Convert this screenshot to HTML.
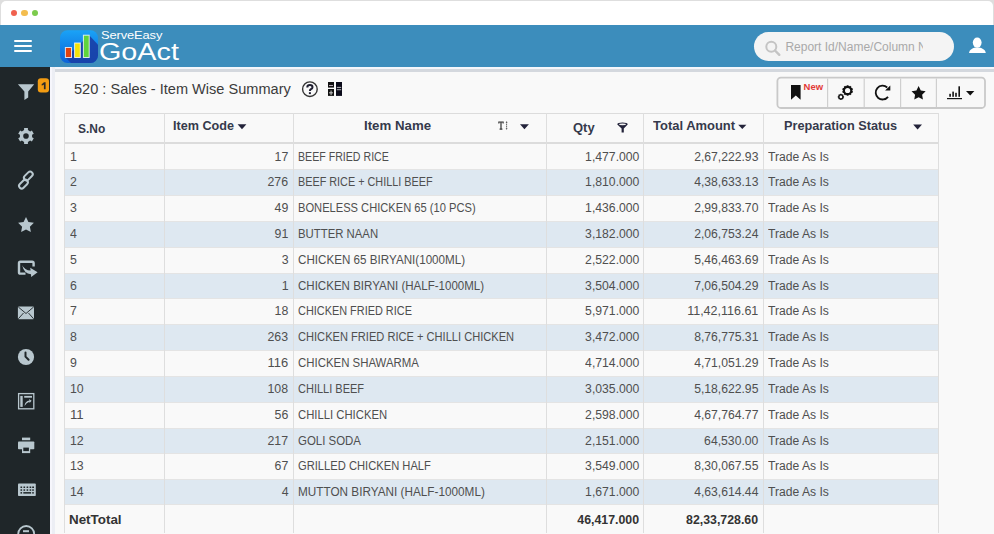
<!DOCTYPE html>
<html><head><meta charset="utf-8"><style>
*{box-sizing:border-box;margin:0;padding:0}
html,body{width:994px;height:534px;overflow:hidden;background:#dedede;position:relative;font-family:'Liberation Sans',sans-serif}
.a{position:absolute}
.t{position:absolute;white-space:pre}
</style></head><body>
<div class="a" style="left:1px;top:1px;width:992px;height:30px;background:#fff;border-radius:5px 5px 0 0"></div>
<div class="a" style="left:10.6px;top:9.8px;width:6.6px;height:6.6px;border-radius:50%;background:#f0614f"></div>
<div class="a" style="left:21.4px;top:9.8px;width:6.6px;height:6.6px;border-radius:50%;background:#f3bd4f"></div>
<div class="a" style="left:31.5px;top:9.8px;width:6.6px;height:6.6px;border-radius:50%;background:#7ccb4d"></div>
<div class="a" style="left:0;top:24.7px;width:994px;height:42.2px;background:#3c8dbc"></div>
<div class="a" style="left:14px;top:39.6px;width:18px;height:2.6px;border-radius:1.3px;background:#fff"></div>
<div class="a" style="left:14px;top:44.6px;width:18px;height:2.6px;border-radius:1.3px;background:#fff"></div>
<div class="a" style="left:14px;top:49.6px;width:18px;height:2.6px;border-radius:1.3px;background:#fff"></div>
<div class="a" style="left:0;top:66.9px;width:49.8px;height:468px;background:#1f2629"></div>
<div class="a" style="left:49.8px;top:66.9px;width:945px;height:468px;background:#f9f9f9"></div>
<div class="a" style="left:49.8px;top:66.9px;width:2.4px;height:468px;background:#f6f6fc"></div>
<div class="a" style="left:52.2px;top:66.9px;width:2.7px;height:468px;background:#eceef4"></div>
<div class="a" style="left:54.9px;top:66.9px;width:940px;height:2.4px;background:#f4f6fb"></div>
<div class="a" style="left:54.9px;top:69.3px;width:940px;height:2.5px;background:#d4d8de"></div>
<div class="t" style="top:81.05px;font-size:14px;line-height:17px;font-weight:400;color:#3c3c3c;left:73.80px;transform-origin:0 0;transform:scaleX(1.0397);font-family:'Liberation Sans', sans-serif;">520 : Sales - Item Wise Summary</div>
<div class="a" style="left:64.5px;top:113.1px;width:873.9px;height:420.9px;background:#f9f9f9"></div>
<div class="a" style="left:64.5px;top:169.70px;width:873.9px;height:25.83px;background:#dee8f1"></div>
<div class="a" style="left:64.5px;top:169.20px;width:873.9px;height:1px;background:#e4e4e4"></div>
<div class="a" style="left:64.5px;top:195.03px;width:873.9px;height:1px;background:#e4e4e4"></div>
<div class="a" style="left:64.5px;top:221.36px;width:873.9px;height:25.83px;background:#dee8f1"></div>
<div class="a" style="left:64.5px;top:220.86px;width:873.9px;height:1px;background:#e4e4e4"></div>
<div class="a" style="left:64.5px;top:246.69px;width:873.9px;height:1px;background:#e4e4e4"></div>
<div class="a" style="left:64.5px;top:273.02px;width:873.9px;height:25.83px;background:#dee8f1"></div>
<div class="a" style="left:64.5px;top:272.52px;width:873.9px;height:1px;background:#e4e4e4"></div>
<div class="a" style="left:64.5px;top:298.35px;width:873.9px;height:1px;background:#e4e4e4"></div>
<div class="a" style="left:64.5px;top:324.68px;width:873.9px;height:25.83px;background:#dee8f1"></div>
<div class="a" style="left:64.5px;top:324.18px;width:873.9px;height:1px;background:#e4e4e4"></div>
<div class="a" style="left:64.5px;top:350.01px;width:873.9px;height:1px;background:#e4e4e4"></div>
<div class="a" style="left:64.5px;top:376.34px;width:873.9px;height:25.83px;background:#dee8f1"></div>
<div class="a" style="left:64.5px;top:375.84px;width:873.9px;height:1px;background:#e4e4e4"></div>
<div class="a" style="left:64.5px;top:401.67px;width:873.9px;height:1px;background:#e4e4e4"></div>
<div class="a" style="left:64.5px;top:428.00px;width:873.9px;height:25.83px;background:#dee8f1"></div>
<div class="a" style="left:64.5px;top:427.50px;width:873.9px;height:1px;background:#e4e4e4"></div>
<div class="a" style="left:64.5px;top:453.33px;width:873.9px;height:1px;background:#e4e4e4"></div>
<div class="a" style="left:64.5px;top:479.66px;width:873.9px;height:24.44px;background:#dee8f1"></div>
<div class="a" style="left:64.5px;top:479.16px;width:873.9px;height:1px;background:#e4e4e4"></div>
<div class="a" style="left:64.5px;top:503.60px;width:873.9px;height:1px;background:#e4e4e4"></div>
<div class="a" style="left:64.5px;top:112.6px;width:873.9px;height:1px;background:#dcdcdc"></div>
<div class="a" style="left:64.5px;top:142.4px;width:873.9px;height:1.6px;background:#dcdcdc"></div>
<div class="a" style="left:64.0px;top:112.6px;width:1px;height:420.9px;background:#dedede"></div>
<div class="a" style="left:164.2px;top:112.6px;width:1px;height:420.9px;background:#dedede"></div>
<div class="a" style="left:293.1px;top:112.6px;width:1px;height:420.9px;background:#dedede"></div>
<div class="a" style="left:545.5px;top:112.6px;width:1px;height:420.9px;background:#dedede"></div>
<div class="a" style="left:643.3px;top:112.6px;width:1px;height:420.9px;background:#dedede"></div>
<div class="a" style="left:762.6px;top:112.6px;width:1px;height:420.9px;background:#dedede"></div>
<div class="a" style="left:937.9px;top:112.6px;width:1px;height:420.9px;background:#dedede"></div>
<div class="t" style="top:121.94px;font-size:12px;line-height:14px;font-weight:700;color:#363a4c;left:78.40px;transform-origin:0 0;transform:scaleX(0.9954);font-family:'Liberation Sans', sans-serif;">S.No</div>
<div class="t" style="top:119.34px;font-size:12px;line-height:14px;font-weight:700;color:#363a4c;left:173.20px;transform-origin:0 0;transform:scaleX(1.0504);font-family:'Liberation Sans', sans-serif;">Item Code</div>
<div class="t" style="top:119.34px;font-size:12px;line-height:14px;font-weight:700;color:#363a4c;left:364.20px;transform-origin:0 0;transform:scaleX(1.1048);font-family:'Liberation Sans', sans-serif;">Item Name</div>
<div class="t" style="top:121.24px;font-size:12px;line-height:14px;font-weight:700;color:#363a4c;left:572.80px;transform-origin:0 0;transform:scaleX(1.0788);font-family:'Liberation Sans', sans-serif;">Qty</div>
<div class="t" style="top:119.44px;font-size:12px;line-height:14px;font-weight:700;color:#363a4c;left:652.90px;transform-origin:0 0;transform:scaleX(1.0804);font-family:'Liberation Sans', sans-serif;">Total Amount</div>
<div class="t" style="top:119.34px;font-size:12px;line-height:14px;font-weight:700;color:#363a4c;left:784.40px;transform-origin:0 0;transform:scaleX(1.0595);font-family:'Liberation Sans', sans-serif;">Preparation Status</div>
<div class="t" style="top:149.51px;font-size:12px;line-height:14px;font-weight:400;color:#4f4f4f;left:70.10px;transform-origin:0 0;transform:scaleX(1.0280);font-family:'Liberation Sans', sans-serif;">1</div>
<div class="t" style="top:149.51px;font-size:12px;line-height:14px;font-weight:400;color:#4f4f4f;right:705.70px;transform-origin:100% 0;transform:scaleX(1.0281);font-family:'Liberation Sans', sans-serif;">17</div>
<div class="t" style="top:149.51px;font-size:12px;line-height:14px;font-weight:400;color:#4f4f4f;left:298.30px;transform-origin:0 0;transform:scaleX(0.8845);font-family:'Liberation Sans', sans-serif;">BEEF FRIED RICE</div>
<div class="t" style="top:149.51px;font-size:12px;line-height:14px;font-weight:400;color:#4f4f4f;right:355.00px;transform-origin:100% 0;transform:scaleX(1.0170);font-family:'Liberation Sans', sans-serif;">1,477.000</div>
<div class="t" style="top:149.51px;font-size:12px;line-height:14px;font-weight:400;color:#4f4f4f;right:235.50px;transform-origin:100% 0;transform:scaleX(1.0136);font-family:'Liberation Sans', sans-serif;">2,67,222.93</div>
<div class="t" style="top:149.51px;font-size:12px;line-height:14px;font-weight:400;color:#4f4f4f;left:767.70px;transform-origin:0 0;transform:scaleX(1.0104);font-family:'Liberation Sans', sans-serif;">Trade As Is</div>
<div class="t" style="top:175.34px;font-size:12px;line-height:14px;font-weight:400;color:#4f4f4f;left:70.10px;transform-origin:0 0;transform:scaleX(1.0280);font-family:'Liberation Sans', sans-serif;">2</div>
<div class="t" style="top:175.34px;font-size:12px;line-height:14px;font-weight:400;color:#4f4f4f;right:705.70px;transform-origin:100% 0;transform:scaleX(1.0281);font-family:'Liberation Sans', sans-serif;">276</div>
<div class="t" style="top:175.34px;font-size:12px;line-height:14px;font-weight:400;color:#4f4f4f;left:298.30px;transform-origin:0 0;transform:scaleX(0.9025);font-family:'Liberation Sans', sans-serif;">BEEF RICE + CHILLI BEEF</div>
<div class="t" style="top:175.34px;font-size:12px;line-height:14px;font-weight:400;color:#4f4f4f;right:355.00px;transform-origin:100% 0;transform:scaleX(1.0170);font-family:'Liberation Sans', sans-serif;">1,810.000</div>
<div class="t" style="top:175.34px;font-size:12px;line-height:14px;font-weight:400;color:#4f4f4f;right:235.50px;transform-origin:100% 0;transform:scaleX(1.0136);font-family:'Liberation Sans', sans-serif;">4,38,633.13</div>
<div class="t" style="top:175.34px;font-size:12px;line-height:14px;font-weight:400;color:#4f4f4f;left:767.70px;transform-origin:0 0;transform:scaleX(1.0104);font-family:'Liberation Sans', sans-serif;">Trade As Is</div>
<div class="t" style="top:201.17px;font-size:12px;line-height:14px;font-weight:400;color:#4f4f4f;left:70.10px;transform-origin:0 0;transform:scaleX(1.0280);font-family:'Liberation Sans', sans-serif;">3</div>
<div class="t" style="top:201.17px;font-size:12px;line-height:14px;font-weight:400;color:#4f4f4f;right:705.70px;transform-origin:100% 0;transform:scaleX(1.0281);font-family:'Liberation Sans', sans-serif;">49</div>
<div class="t" style="top:201.17px;font-size:12px;line-height:14px;font-weight:400;color:#4f4f4f;left:298.30px;transform-origin:0 0;transform:scaleX(0.9279);font-family:'Liberation Sans', sans-serif;">BONELESS CHICKEN 65 (10 PCS)</div>
<div class="t" style="top:201.17px;font-size:12px;line-height:14px;font-weight:400;color:#4f4f4f;right:355.00px;transform-origin:100% 0;transform:scaleX(1.0170);font-family:'Liberation Sans', sans-serif;">1,436.000</div>
<div class="t" style="top:201.17px;font-size:12px;line-height:14px;font-weight:400;color:#4f4f4f;right:235.50px;transform-origin:100% 0;transform:scaleX(1.0136);font-family:'Liberation Sans', sans-serif;">2,99,833.70</div>
<div class="t" style="top:201.17px;font-size:12px;line-height:14px;font-weight:400;color:#4f4f4f;left:767.70px;transform-origin:0 0;transform:scaleX(1.0104);font-family:'Liberation Sans', sans-serif;">Trade As Is</div>
<div class="t" style="top:227.00px;font-size:12px;line-height:14px;font-weight:400;color:#4f4f4f;left:70.10px;transform-origin:0 0;transform:scaleX(1.0280);font-family:'Liberation Sans', sans-serif;">4</div>
<div class="t" style="top:227.00px;font-size:12px;line-height:14px;font-weight:400;color:#4f4f4f;right:705.70px;transform-origin:100% 0;transform:scaleX(1.0281);font-family:'Liberation Sans', sans-serif;">91</div>
<div class="t" style="top:227.00px;font-size:12px;line-height:14px;font-weight:400;color:#4f4f4f;left:298.30px;transform-origin:0 0;transform:scaleX(0.9465);font-family:'Liberation Sans', sans-serif;">BUTTER NAAN</div>
<div class="t" style="top:227.00px;font-size:12px;line-height:14px;font-weight:400;color:#4f4f4f;right:355.00px;transform-origin:100% 0;transform:scaleX(1.0170);font-family:'Liberation Sans', sans-serif;">3,182.000</div>
<div class="t" style="top:227.00px;font-size:12px;line-height:14px;font-weight:400;color:#4f4f4f;right:235.50px;transform-origin:100% 0;transform:scaleX(1.0136);font-family:'Liberation Sans', sans-serif;">2,06,753.24</div>
<div class="t" style="top:227.00px;font-size:12px;line-height:14px;font-weight:400;color:#4f4f4f;left:767.70px;transform-origin:0 0;transform:scaleX(1.0104);font-family:'Liberation Sans', sans-serif;">Trade As Is</div>
<div class="t" style="top:252.83px;font-size:12px;line-height:14px;font-weight:400;color:#4f4f4f;left:70.10px;transform-origin:0 0;transform:scaleX(1.0280);font-family:'Liberation Sans', sans-serif;">5</div>
<div class="t" style="top:252.83px;font-size:12px;line-height:14px;font-weight:400;color:#4f4f4f;right:705.70px;transform-origin:100% 0;transform:scaleX(1.0280);font-family:'Liberation Sans', sans-serif;">3</div>
<div class="t" style="top:252.83px;font-size:12px;line-height:14px;font-weight:400;color:#4f4f4f;left:298.30px;transform-origin:0 0;transform:scaleX(0.9699);font-family:'Liberation Sans', sans-serif;">CHICKEN 65 BIRYANI(1000ML)</div>
<div class="t" style="top:252.83px;font-size:12px;line-height:14px;font-weight:400;color:#4f4f4f;right:355.00px;transform-origin:100% 0;transform:scaleX(1.0170);font-family:'Liberation Sans', sans-serif;">2,522.000</div>
<div class="t" style="top:252.83px;font-size:12px;line-height:14px;font-weight:400;color:#4f4f4f;right:235.50px;transform-origin:100% 0;transform:scaleX(1.0136);font-family:'Liberation Sans', sans-serif;">5,46,463.69</div>
<div class="t" style="top:252.83px;font-size:12px;line-height:14px;font-weight:400;color:#4f4f4f;left:767.70px;transform-origin:0 0;transform:scaleX(1.0104);font-family:'Liberation Sans', sans-serif;">Trade As Is</div>
<div class="t" style="top:278.66px;font-size:12px;line-height:14px;font-weight:400;color:#4f4f4f;left:70.10px;transform-origin:0 0;transform:scaleX(1.0280);font-family:'Liberation Sans', sans-serif;">6</div>
<div class="t" style="top:278.66px;font-size:12px;line-height:14px;font-weight:400;color:#4f4f4f;right:705.70px;transform-origin:100% 0;transform:scaleX(1.0280);font-family:'Liberation Sans', sans-serif;">1</div>
<div class="t" style="top:278.66px;font-size:12px;line-height:14px;font-weight:400;color:#4f4f4f;left:298.30px;transform-origin:0 0;transform:scaleX(0.9614);font-family:'Liberation Sans', sans-serif;">CHICKEN BIRYANI (HALF-1000ML)</div>
<div class="t" style="top:278.66px;font-size:12px;line-height:14px;font-weight:400;color:#4f4f4f;right:355.00px;transform-origin:100% 0;transform:scaleX(1.0170);font-family:'Liberation Sans', sans-serif;">3,504.000</div>
<div class="t" style="top:278.66px;font-size:12px;line-height:14px;font-weight:400;color:#4f4f4f;right:235.50px;transform-origin:100% 0;transform:scaleX(1.0136);font-family:'Liberation Sans', sans-serif;">7,06,504.29</div>
<div class="t" style="top:278.66px;font-size:12px;line-height:14px;font-weight:400;color:#4f4f4f;left:767.70px;transform-origin:0 0;transform:scaleX(1.0104);font-family:'Liberation Sans', sans-serif;">Trade As Is</div>
<div class="t" style="top:304.49px;font-size:12px;line-height:14px;font-weight:400;color:#4f4f4f;left:70.10px;transform-origin:0 0;transform:scaleX(1.0280);font-family:'Liberation Sans', sans-serif;">7</div>
<div class="t" style="top:304.49px;font-size:12px;line-height:14px;font-weight:400;color:#4f4f4f;right:705.70px;transform-origin:100% 0;transform:scaleX(1.0281);font-family:'Liberation Sans', sans-serif;">18</div>
<div class="t" style="top:304.49px;font-size:12px;line-height:14px;font-weight:400;color:#4f4f4f;left:298.30px;transform-origin:0 0;transform:scaleX(0.9089);font-family:'Liberation Sans', sans-serif;">CHICKEN FRIED RICE</div>
<div class="t" style="top:304.49px;font-size:12px;line-height:14px;font-weight:400;color:#4f4f4f;right:355.00px;transform-origin:100% 0;transform:scaleX(1.0170);font-family:'Liberation Sans', sans-serif;">5,971.000</div>
<div class="t" style="top:304.49px;font-size:12px;line-height:14px;font-weight:400;color:#4f4f4f;right:235.50px;transform-origin:100% 0;transform:scaleX(1.0414);font-family:'Liberation Sans', sans-serif;">11,42,116.61</div>
<div class="t" style="top:304.49px;font-size:12px;line-height:14px;font-weight:400;color:#4f4f4f;left:767.70px;transform-origin:0 0;transform:scaleX(1.0104);font-family:'Liberation Sans', sans-serif;">Trade As Is</div>
<div class="t" style="top:330.32px;font-size:12px;line-height:14px;font-weight:400;color:#4f4f4f;left:70.10px;transform-origin:0 0;transform:scaleX(1.0280);font-family:'Liberation Sans', sans-serif;">8</div>
<div class="t" style="top:330.32px;font-size:12px;line-height:14px;font-weight:400;color:#4f4f4f;right:705.70px;transform-origin:100% 0;transform:scaleX(1.0281);font-family:'Liberation Sans', sans-serif;">263</div>
<div class="t" style="top:330.32px;font-size:12px;line-height:14px;font-weight:400;color:#4f4f4f;left:298.30px;transform-origin:0 0;transform:scaleX(0.9248);font-family:'Liberation Sans', sans-serif;">CHICKEN FRIED RICE + CHILLI CHICKEN</div>
<div class="t" style="top:330.32px;font-size:12px;line-height:14px;font-weight:400;color:#4f4f4f;right:355.00px;transform-origin:100% 0;transform:scaleX(1.0170);font-family:'Liberation Sans', sans-serif;">3,472.000</div>
<div class="t" style="top:330.32px;font-size:12px;line-height:14px;font-weight:400;color:#4f4f4f;right:235.50px;transform-origin:100% 0;transform:scaleX(1.0136);font-family:'Liberation Sans', sans-serif;">8,76,775.31</div>
<div class="t" style="top:330.32px;font-size:12px;line-height:14px;font-weight:400;color:#4f4f4f;left:767.70px;transform-origin:0 0;transform:scaleX(1.0104);font-family:'Liberation Sans', sans-serif;">Trade As Is</div>
<div class="t" style="top:356.15px;font-size:12px;line-height:14px;font-weight:400;color:#4f4f4f;left:70.10px;transform-origin:0 0;transform:scaleX(1.0280);font-family:'Liberation Sans', sans-serif;">9</div>
<div class="t" style="top:356.15px;font-size:12px;line-height:14px;font-weight:400;color:#4f4f4f;right:705.70px;transform-origin:100% 0;transform:scaleX(1.0759);font-family:'Liberation Sans', sans-serif;">116</div>
<div class="t" style="top:356.15px;font-size:12px;line-height:14px;font-weight:400;color:#4f4f4f;left:298.30px;transform-origin:0 0;transform:scaleX(0.9516);font-family:'Liberation Sans', sans-serif;">CHICKEN SHAWARMA</div>
<div class="t" style="top:356.15px;font-size:12px;line-height:14px;font-weight:400;color:#4f4f4f;right:355.00px;transform-origin:100% 0;transform:scaleX(1.0170);font-family:'Liberation Sans', sans-serif;">4,714.000</div>
<div class="t" style="top:356.15px;font-size:12px;line-height:14px;font-weight:400;color:#4f4f4f;right:235.50px;transform-origin:100% 0;transform:scaleX(1.0136);font-family:'Liberation Sans', sans-serif;">4,71,051.29</div>
<div class="t" style="top:356.15px;font-size:12px;line-height:14px;font-weight:400;color:#4f4f4f;left:767.70px;transform-origin:0 0;transform:scaleX(1.0104);font-family:'Liberation Sans', sans-serif;">Trade As Is</div>
<div class="t" style="top:381.98px;font-size:12px;line-height:14px;font-weight:400;color:#4f4f4f;left:70.10px;transform-origin:0 0;transform:scaleX(1.0281);font-family:'Liberation Sans', sans-serif;">10</div>
<div class="t" style="top:381.98px;font-size:12px;line-height:14px;font-weight:400;color:#4f4f4f;right:705.70px;transform-origin:100% 0;transform:scaleX(1.0281);font-family:'Liberation Sans', sans-serif;">108</div>
<div class="t" style="top:381.98px;font-size:12px;line-height:14px;font-weight:400;color:#4f4f4f;left:298.30px;transform-origin:0 0;transform:scaleX(0.9169);font-family:'Liberation Sans', sans-serif;">CHILLI BEEF</div>
<div class="t" style="top:381.98px;font-size:12px;line-height:14px;font-weight:400;color:#4f4f4f;right:355.00px;transform-origin:100% 0;transform:scaleX(1.0170);font-family:'Liberation Sans', sans-serif;">3,035.000</div>
<div class="t" style="top:381.98px;font-size:12px;line-height:14px;font-weight:400;color:#4f4f4f;right:235.50px;transform-origin:100% 0;transform:scaleX(1.0136);font-family:'Liberation Sans', sans-serif;">5,18,622.95</div>
<div class="t" style="top:381.98px;font-size:12px;line-height:14px;font-weight:400;color:#4f4f4f;left:767.70px;transform-origin:0 0;transform:scaleX(1.0104);font-family:'Liberation Sans', sans-serif;">Trade As Is</div>
<div class="t" style="top:407.81px;font-size:12px;line-height:14px;font-weight:400;color:#4f4f4f;left:70.10px;transform-origin:0 0;transform:scaleX(1.1015);font-family:'Liberation Sans', sans-serif;">11</div>
<div class="t" style="top:407.81px;font-size:12px;line-height:14px;font-weight:400;color:#4f4f4f;right:705.70px;transform-origin:100% 0;transform:scaleX(1.0281);font-family:'Liberation Sans', sans-serif;">56</div>
<div class="t" style="top:407.81px;font-size:12px;line-height:14px;font-weight:400;color:#4f4f4f;left:298.30px;transform-origin:0 0;transform:scaleX(0.9413);font-family:'Liberation Sans', sans-serif;">CHILLI CHICKEN</div>
<div class="t" style="top:407.81px;font-size:12px;line-height:14px;font-weight:400;color:#4f4f4f;right:355.00px;transform-origin:100% 0;transform:scaleX(1.0170);font-family:'Liberation Sans', sans-serif;">2,598.000</div>
<div class="t" style="top:407.81px;font-size:12px;line-height:14px;font-weight:400;color:#4f4f4f;right:235.50px;transform-origin:100% 0;transform:scaleX(1.0136);font-family:'Liberation Sans', sans-serif;">4,67,764.77</div>
<div class="t" style="top:407.81px;font-size:12px;line-height:14px;font-weight:400;color:#4f4f4f;left:767.70px;transform-origin:0 0;transform:scaleX(1.0104);font-family:'Liberation Sans', sans-serif;">Trade As Is</div>
<div class="t" style="top:433.64px;font-size:12px;line-height:14px;font-weight:400;color:#4f4f4f;left:70.10px;transform-origin:0 0;transform:scaleX(1.0281);font-family:'Liberation Sans', sans-serif;">12</div>
<div class="t" style="top:433.64px;font-size:12px;line-height:14px;font-weight:400;color:#4f4f4f;right:705.70px;transform-origin:100% 0;transform:scaleX(1.0281);font-family:'Liberation Sans', sans-serif;">217</div>
<div class="t" style="top:433.64px;font-size:12px;line-height:14px;font-weight:400;color:#4f4f4f;left:298.30px;transform-origin:0 0;transform:scaleX(0.9541);font-family:'Liberation Sans', sans-serif;">GOLI SODA</div>
<div class="t" style="top:433.64px;font-size:12px;line-height:14px;font-weight:400;color:#4f4f4f;right:355.00px;transform-origin:100% 0;transform:scaleX(1.0170);font-family:'Liberation Sans', sans-serif;">2,151.000</div>
<div class="t" style="top:433.64px;font-size:12px;line-height:14px;font-weight:400;color:#4f4f4f;right:235.50px;transform-origin:100% 0;transform:scaleX(1.0170);font-family:'Liberation Sans', sans-serif;">64,530.00</div>
<div class="t" style="top:433.64px;font-size:12px;line-height:14px;font-weight:400;color:#4f4f4f;left:767.70px;transform-origin:0 0;transform:scaleX(1.0104);font-family:'Liberation Sans', sans-serif;">Trade As Is</div>
<div class="t" style="top:459.47px;font-size:12px;line-height:14px;font-weight:400;color:#4f4f4f;left:70.10px;transform-origin:0 0;transform:scaleX(1.0281);font-family:'Liberation Sans', sans-serif;">13</div>
<div class="t" style="top:459.47px;font-size:12px;line-height:14px;font-weight:400;color:#4f4f4f;right:705.70px;transform-origin:100% 0;transform:scaleX(1.0281);font-family:'Liberation Sans', sans-serif;">67</div>
<div class="t" style="top:459.47px;font-size:12px;line-height:14px;font-weight:400;color:#4f4f4f;left:298.30px;transform-origin:0 0;transform:scaleX(0.9312);font-family:'Liberation Sans', sans-serif;">GRILLED CHICKEN HALF</div>
<div class="t" style="top:459.47px;font-size:12px;line-height:14px;font-weight:400;color:#4f4f4f;right:355.00px;transform-origin:100% 0;transform:scaleX(1.0170);font-family:'Liberation Sans', sans-serif;">3,549.000</div>
<div class="t" style="top:459.47px;font-size:12px;line-height:14px;font-weight:400;color:#4f4f4f;right:235.50px;transform-origin:100% 0;transform:scaleX(1.0136);font-family:'Liberation Sans', sans-serif;">8,30,067.55</div>
<div class="t" style="top:459.47px;font-size:12px;line-height:14px;font-weight:400;color:#4f4f4f;left:767.70px;transform-origin:0 0;transform:scaleX(1.0104);font-family:'Liberation Sans', sans-serif;">Trade As Is</div>
<div class="t" style="top:485.30px;font-size:12px;line-height:14px;font-weight:400;color:#4f4f4f;left:70.10px;transform-origin:0 0;transform:scaleX(1.0281);font-family:'Liberation Sans', sans-serif;">14</div>
<div class="t" style="top:485.30px;font-size:12px;line-height:14px;font-weight:400;color:#4f4f4f;right:705.70px;transform-origin:100% 0;transform:scaleX(1.0280);font-family:'Liberation Sans', sans-serif;">4</div>
<div class="t" style="top:485.30px;font-size:12px;line-height:14px;font-weight:400;color:#4f4f4f;left:298.30px;transform-origin:0 0;transform:scaleX(0.9799);font-family:'Liberation Sans', sans-serif;">MUTTON BIRYANI (HALF-1000ML)</div>
<div class="t" style="top:485.30px;font-size:12px;line-height:14px;font-weight:400;color:#4f4f4f;right:355.00px;transform-origin:100% 0;transform:scaleX(1.0170);font-family:'Liberation Sans', sans-serif;">1,671.000</div>
<div class="t" style="top:485.30px;font-size:12px;line-height:14px;font-weight:400;color:#4f4f4f;right:235.50px;transform-origin:100% 0;transform:scaleX(1.0136);font-family:'Liberation Sans', sans-serif;">4,63,614.44</div>
<div class="t" style="top:485.30px;font-size:12px;line-height:14px;font-weight:400;color:#4f4f4f;left:767.70px;transform-origin:0 0;transform:scaleX(1.0104);font-family:'Liberation Sans', sans-serif;">Trade As Is</div>
<div class="t" style="top:513.44px;font-size:12px;line-height:14px;font-weight:700;color:#333;left:69.40px;transform-origin:0 0;transform:scaleX(1.1158);font-family:'Liberation Sans', sans-serif;">NetTotal</div>
<div class="t" style="top:513.44px;font-size:12px;line-height:14px;font-weight:700;color:#333;right:355.00px;transform-origin:100% 0;transform:scaleX(1.0278);font-family:'Liberation Sans', sans-serif;">46,417.000</div>
<div class="t" style="top:513.44px;font-size:12px;line-height:14px;font-weight:700;color:#333;right:235.50px;transform-origin:100% 0;transform:scaleX(1.0279);font-family:'Liberation Sans', sans-serif;">82,33,728.60</div>
<svg class="a" style="left:0;top:0" width="994" height="534" viewBox="0 0 994 534"><defs><linearGradient id="lg" x1="0" y1="0" x2="0" y2="1"><stop offset="0" stop-color="#1aa3f7"/><stop offset="1" stop-color="#0b62d8"/></linearGradient><clipPath id="lc"><rect x="60" y="30.2" width="38" height="32.7" rx="7.5"/></clipPath></defs><rect x="60" y="30.2" width="38" height="32.7" rx="7.5" fill="url(#lg)"/><path clip-path="url(#lc)" d="M89.2 35.2 L100 47 L100 64 L72 64 L65.4 57.5 Z" fill="#1a3fa6" opacity="0.9"/><rect x="65.4" y="47.5" width="6.099999999999994" height="10.0" fill="#e2410f" stroke="#fff" stroke-width="1" stroke-opacity="0.8"/><rect x="74.6" y="43.0" width="5.700000000000003" height="14.5" fill="#f4e20a" stroke="#fff" stroke-width="1" stroke-opacity="0.8"/><rect x="83.4" y="35.2" width="5.799999999999997" height="22.299999999999997" fill="#5fd43b" stroke="#fff" stroke-width="1" stroke-opacity="0.8"/><circle cx="771.3" cy="46.8" r="5" fill="none" stroke="#c4c4c4" stroke-width="2"/><path d="M775 50.5 L779.3 54.8" stroke="#c4c4c4" stroke-width="2.4" stroke-linecap="round"/><ellipse cx="977.2" cy="42.6" rx="4.4" ry="5.1" fill="#fff"/><path d="M969 53.1 C969.5 49.5 973 47.6 977.3 47.6 C981.6 47.6 985.3 49.5 985.8 53.1 Z" fill="#fff"/><path d="M17.9 84.2 H34.2 L28.2 91.6 V97.6 L24.4 100 V91.6 Z" fill="#b8c7ce"/><rect x="37.8" y="78.3" width="11.2" height="14.1" rx="3" fill="#f39c12"/><path fill-rule="evenodd" d="M24.08 130.11 L24.11 128.12 L27.89 128.12 L27.92 130.11 L30.14 131.39 L31.88 130.42 L33.77 133.70 L32.07 134.72 L32.07 137.28 L33.77 138.30 L31.88 141.58 L30.14 140.61 L27.92 141.89 L27.89 143.88 L24.11 143.88 L24.08 141.89 L21.86 140.61 L20.12 141.58 L18.23 138.30 L19.93 137.28 L19.93 134.72 L18.23 133.70 L20.12 130.42 L21.86 131.39 Z M28.80 136.00 A2.8 2.8 0 1 0 23.20 136.00 A2.8 2.8 0 1 0 28.80 136.00 Z" fill="#b8c7ce"/><g transform="rotate(-45 25.9 180.05)" fill="none" stroke="#b8c7ce" stroke-width="2"><rect x="16.2" y="178.6" width="10.2" height="5.2" rx="2.6"/><rect x="25.4" y="176.3" width="10.2" height="5.2" rx="2.6"/></g><path d="M26.00 217.10 L28.41 222.08 L33.89 222.84 L29.90 226.67 L30.88 232.11 L26.00 229.50 L21.12 232.11 L22.10 226.67 L18.11 222.84 L23.59 222.08 Z" fill="#b8c7ce"/><path d="M33.6 266.5 V263.2 Q33.6 261.8 32.2 261.8 H20.4 Q19 261.8 19 263.2 V272.2 Q19 273.6 20.4 273.6 H25.5" fill="none" stroke="#b8c7ce" stroke-width="2.4"/><path d="M22.2 265.2 Q24.5 270.2 30.6 270.6 L30.2 267.8 L37.6 272.3 L31.2 277 L31 274.2 Q24 273.8 22.2 265.2 Z" fill="#b8c7ce"/><rect x="17.9" y="306.6" width="16.1" height="12.6" rx="1" fill="#b8c7ce"/><path d="M18.3 307 L26 313.5 L33.6 307 M18.3 318.8 L23.5 313 M33.6 318.8 L28.5 313" stroke="#1f2629" stroke-width="0.9" fill="none"/><circle cx="26" cy="357" r="8.1" fill="#b8c7ce"/><path d="M25.5 352.4 V356.6 L28.6 359.7" stroke="#1f2629" stroke-width="2" fill="none" stroke-linecap="round"/><rect x="18.6" y="393.6" width="15.2" height="15.2" fill="none" stroke="#b8c7ce" stroke-width="1.3"/><rect x="20.3" y="395.9" width="2.4" height="11" fill="#b8c7ce"/><rect x="24.2" y="395.9" width="7.8" height="1.8" fill="#b8c7ce"/><path d="M24.5 406 Q25 401 29.5 400.5 L29 399 L31.6 400.8 L29.6 403 L29.4 401.8 Q26.5 402.5 24.5 406 Z" fill="#b8c7ce"/><rect x="22" y="437.6" width="8.2" height="2.6" fill="#b8c7ce"/><rect x="18" y="441.4" width="16.3" height="7.8" rx="0.8" fill="#b8c7ce"/><rect x="22" y="446.5" width="8.2" height="6.6" fill="#b8c7ce"/><rect x="23.3" y="447.6" width="5.6" height="3.5" fill="#1f2629"/><rect x="18" y="483.6" width="17.8" height="12.4" rx="0.8" fill="#b8c7ce"/><rect x="20.5" y="486.5" width="1.6" height="1.5" fill="#1f2629"/><rect x="23.5" y="486.5" width="1.6" height="1.5" fill="#1f2629"/><rect x="26.6" y="486.5" width="1.6" height="1.5" fill="#1f2629"/><rect x="29.6" y="486.5" width="1.6" height="1.5" fill="#1f2629"/><rect x="32.2" y="486.5" width="1.8" height="1.5" fill="#1f2629"/><rect x="20.5" y="489.3" width="1.6" height="1.5" fill="#1f2629"/><rect x="23.5" y="489.3" width="1.6" height="1.5" fill="#1f2629"/><rect x="26.6" y="489.3" width="1.6" height="1.5" fill="#1f2629"/><rect x="29.6" y="489.3" width="1.6" height="1.5" fill="#1f2629"/><rect x="32.2" y="489.3" width="1.6" height="1.5" fill="#1f2629"/><rect x="20.5" y="492.1" width="1.6" height="1.5" fill="#1f2629"/><rect x="32.2" y="492.1" width="1.6" height="1.5" fill="#1f2629"/><rect x="23.3" y="492.1" width="7.8" height="1.5" fill="#1f2629"/><path d="M18.2 534 A8 8 0 0 1 34.2 534" fill="none" stroke="#b8c7ce" stroke-width="1.8"/><rect x="23" y="530.2" width="6" height="2" fill="#b8c7ce"/><circle cx="309.9" cy="89.2" r="7.3" fill="none" stroke="#333" stroke-width="1.4"/><path d="M307.3 87.4 Q307.3 85.1 309.9 85.1 Q312.5 85.1 312.5 87.2 Q312.5 88.5 311 89.2 Q309.9 89.8 309.9 91" fill="none" stroke="#1e1e30" stroke-width="2"/><rect x="308.9" y="92.2" width="2" height="1.9" fill="#1e1e30"/><rect x="328" y="82" width="6" height="5.6" fill="#111"/><rect x="328" y="89" width="6" height="6.9" fill="#111"/><rect x="336" y="82" width="6" height="13.9" fill="#0b0b1a"/><rect x="336.8" y="86.9" width="4.4" height="0.9" fill="#ccc"/><rect x="336.8" y="89.3" width="4.4" height="0.9" fill="#ccc"/><rect x="329" y="85" width="4" height="0.9" fill="#c8b8c8"/><rect x="330.6" y="90.5" width="0.9" height="4.6" fill="#ddd"/><rect x="329" y="92.4" width="4" height="0.9" fill="#ddd"/><path d="M237.6 124.3 H246.4 L242.0 129.2 Z" fill="#23233a"/><path d="M520.0 124.3 H528.9 L524.45 129.2 Z" fill="#23233a"/><path d="M738.2 124.8 H746.4 L742.3 129.0 Z" fill="#23233a"/><path d="M913.2 124.5 H922.0 L917.6 129.5 Z" fill="#23233a"/><path d="M498.3 121.6 H503.7 V123.4 H502.6 V122.6 H501.6 V128.6 H502.4 V129.7 H499.6 V128.6 H500.4 V122.6 H499.4 V123.4 H498.3 Z" fill="#333"/><path d="M506.6 121.6 V129.6" stroke="#555" stroke-width="1" stroke-dasharray="1.3 0.7"/><path d="M505.6 122.8 L506.6 121.5 L507.6 122.8 Z M505.6 128.4 L506.6 129.7 L507.6 128.4 Z" fill="#555"/><path d="M617.3 124.5 Q617.3 122.6 622.5 122.6 Q627.7 122.6 627.7 124.5 L623.8 128.6 V132.6 H621.6 V128.6 Z" fill="#23233a"/><ellipse cx="622.5" cy="124.3" rx="3.4" ry="0.9" fill="#f4f4f4"/><rect x="777.4" y="77.6" width="207.6" height="30.4" rx="3.5" fill="#f8f8f8" stroke="#c9c9c9" stroke-width="1.8"/><rect x="827.0" y="78.5" width="1.2" height="28.7" fill="#cfcfcf"/><rect x="863.6" y="78.5" width="1.2" height="28.7" fill="#cfcfcf"/><rect x="900.0" y="78.5" width="1.2" height="28.7" fill="#cfcfcf"/><rect x="935.8" y="78.5" width="1.2" height="28.7" fill="#cfcfcf"/><path d="M791 84.9 H800.6 V99.8 L795.8 95.6 L791 99.8 Z" fill="#111"/><path fill-rule="evenodd" d="M846.50 85.93 L846.76 85.17 L848.44 85.17 L848.70 85.93 L849.39 86.16 L850.05 85.69 L851.42 86.68 L851.18 87.45 L851.60 88.04 L852.41 88.05 L852.93 89.66 L852.29 90.14 L852.29 90.86 L852.93 91.34 L852.41 92.95 L851.60 92.96 L851.18 93.55 L851.42 94.32 L850.05 95.31 L849.39 94.84 L848.70 95.07 L848.44 95.83 L846.76 95.83 L846.50 95.07 L845.81 94.84 L845.15 95.31 L843.78 94.32 L844.02 93.55 L843.60 92.96 L842.79 92.95 L842.27 91.34 L842.91 90.86 L842.91 90.14 L842.27 89.66 L842.79 88.05 L843.60 88.04 L844.02 87.45 L843.78 86.68 L845.15 85.69 L845.81 86.16 Z M850.20 90.50 A2.6 2.6 0 1 0 845.00 90.50 A2.6 2.6 0 1 0 850.20 90.50 Z" fill="#111"/><path fill-rule="evenodd" d="M840.16 94.30 L840.28 93.76 L841.52 93.76 L841.64 94.30 L842.22 94.54 L842.68 94.24 L843.56 95.12 L843.26 95.58 L843.50 96.16 L844.04 96.28 L844.04 97.52 L843.50 97.64 L843.26 98.22 L843.56 98.68 L842.68 99.56 L842.22 99.26 L841.64 99.50 L841.52 100.04 L840.28 100.04 L840.16 99.50 L839.58 99.26 L839.12 99.56 L838.24 98.68 L838.54 98.22 L838.30 97.64 L837.76 97.52 L837.76 96.28 L838.30 96.16 L838.54 95.58 L838.24 95.12 L839.12 94.24 L839.58 94.54 Z M842.20 96.90 A1.3 1.3 0 1 0 839.60 96.90 A1.3 1.3 0 1 0 842.20 96.90 Z" fill="#111"/><path d="M887.22 87.47 A6.9 6.9 0 1 0 888.04 96.85" fill="none" stroke="#111" stroke-width="1.8"/><path d="M890.3 85.4 V90.6 H885.1 Z" fill="#111"/><path d="M918.60 86.10 L920.77 90.51 L925.64 91.21 L922.12 94.64 L922.95 99.49 L918.60 97.20 L914.25 99.49 L915.08 94.64 L911.56 91.21 L916.43 90.51 Z" fill="#111"/><rect x="947" y="98" width="15" height="1.2" fill="#111"/><rect x="949.3" y="93.8" width="1.6" height="3.0" fill="#111"/><rect x="952.3" y="91.6" width="1.6" height="5.2" fill="#111"/><rect x="955.2" y="92.8" width="1.6" height="4.0" fill="#111"/><rect x="958.4" y="86.3" width="1.6" height="10.5" fill="#111"/><path d="M966 90.9 H974.4 L970.2 95.5 Z" fill="#111"/></svg>
<div class="a" style="left:754px;top:32.1px;width:200.3px;height:29.4px;border-radius:15px;background:#f4f4f4"></div>
<svg class="a" style="left:0;top:0" width="994" height="70"><circle cx="771.3" cy="46.8" r="5" fill="none" stroke="#c4c4c4" stroke-width="2"/><path d="M775 50.5 L779.3 54.8" stroke="#c4c4c4" stroke-width="2.4" stroke-linecap="round"/></svg>
<div class="t" style="left:785.4px;top:40px;width:138px;overflow:hidden;font-size:12px;line-height:14px;color:#a9a9a9;font-family:'Liberation Sans',sans-serif">Report Id/Name/Column Name</div>
<div class="t" style="left:101px;top:29.4px;font-size:11.5px;line-height:13px;color:#fff;letter-spacing:-0.1px;transform:scaleX(1.12);transform-origin:0 0">ServeEasy</div>
<div class="t" style="left:99.4px;top:38.6px;font-size:23px;line-height:26px;color:#fff;transform:scaleX(1.25);transform-origin:0 0">GoAct</div>
<div class="t" style="left:803.6px;top:81.2px;font-size:9.5px;line-height:11px;font-weight:700;color:#e23a36">New</div>
<svg class="a" style="left:0;top:0" width="60" height="100"><path d="M43.9 82.2 H45.6 V89.3 H43.9 V84.4 Q42.9 85.2 41.7 85.4 V83.9 Q43.2 83.4 43.9 82.2 Z" fill="#2a2a2a"/></svg>
</body></html>
